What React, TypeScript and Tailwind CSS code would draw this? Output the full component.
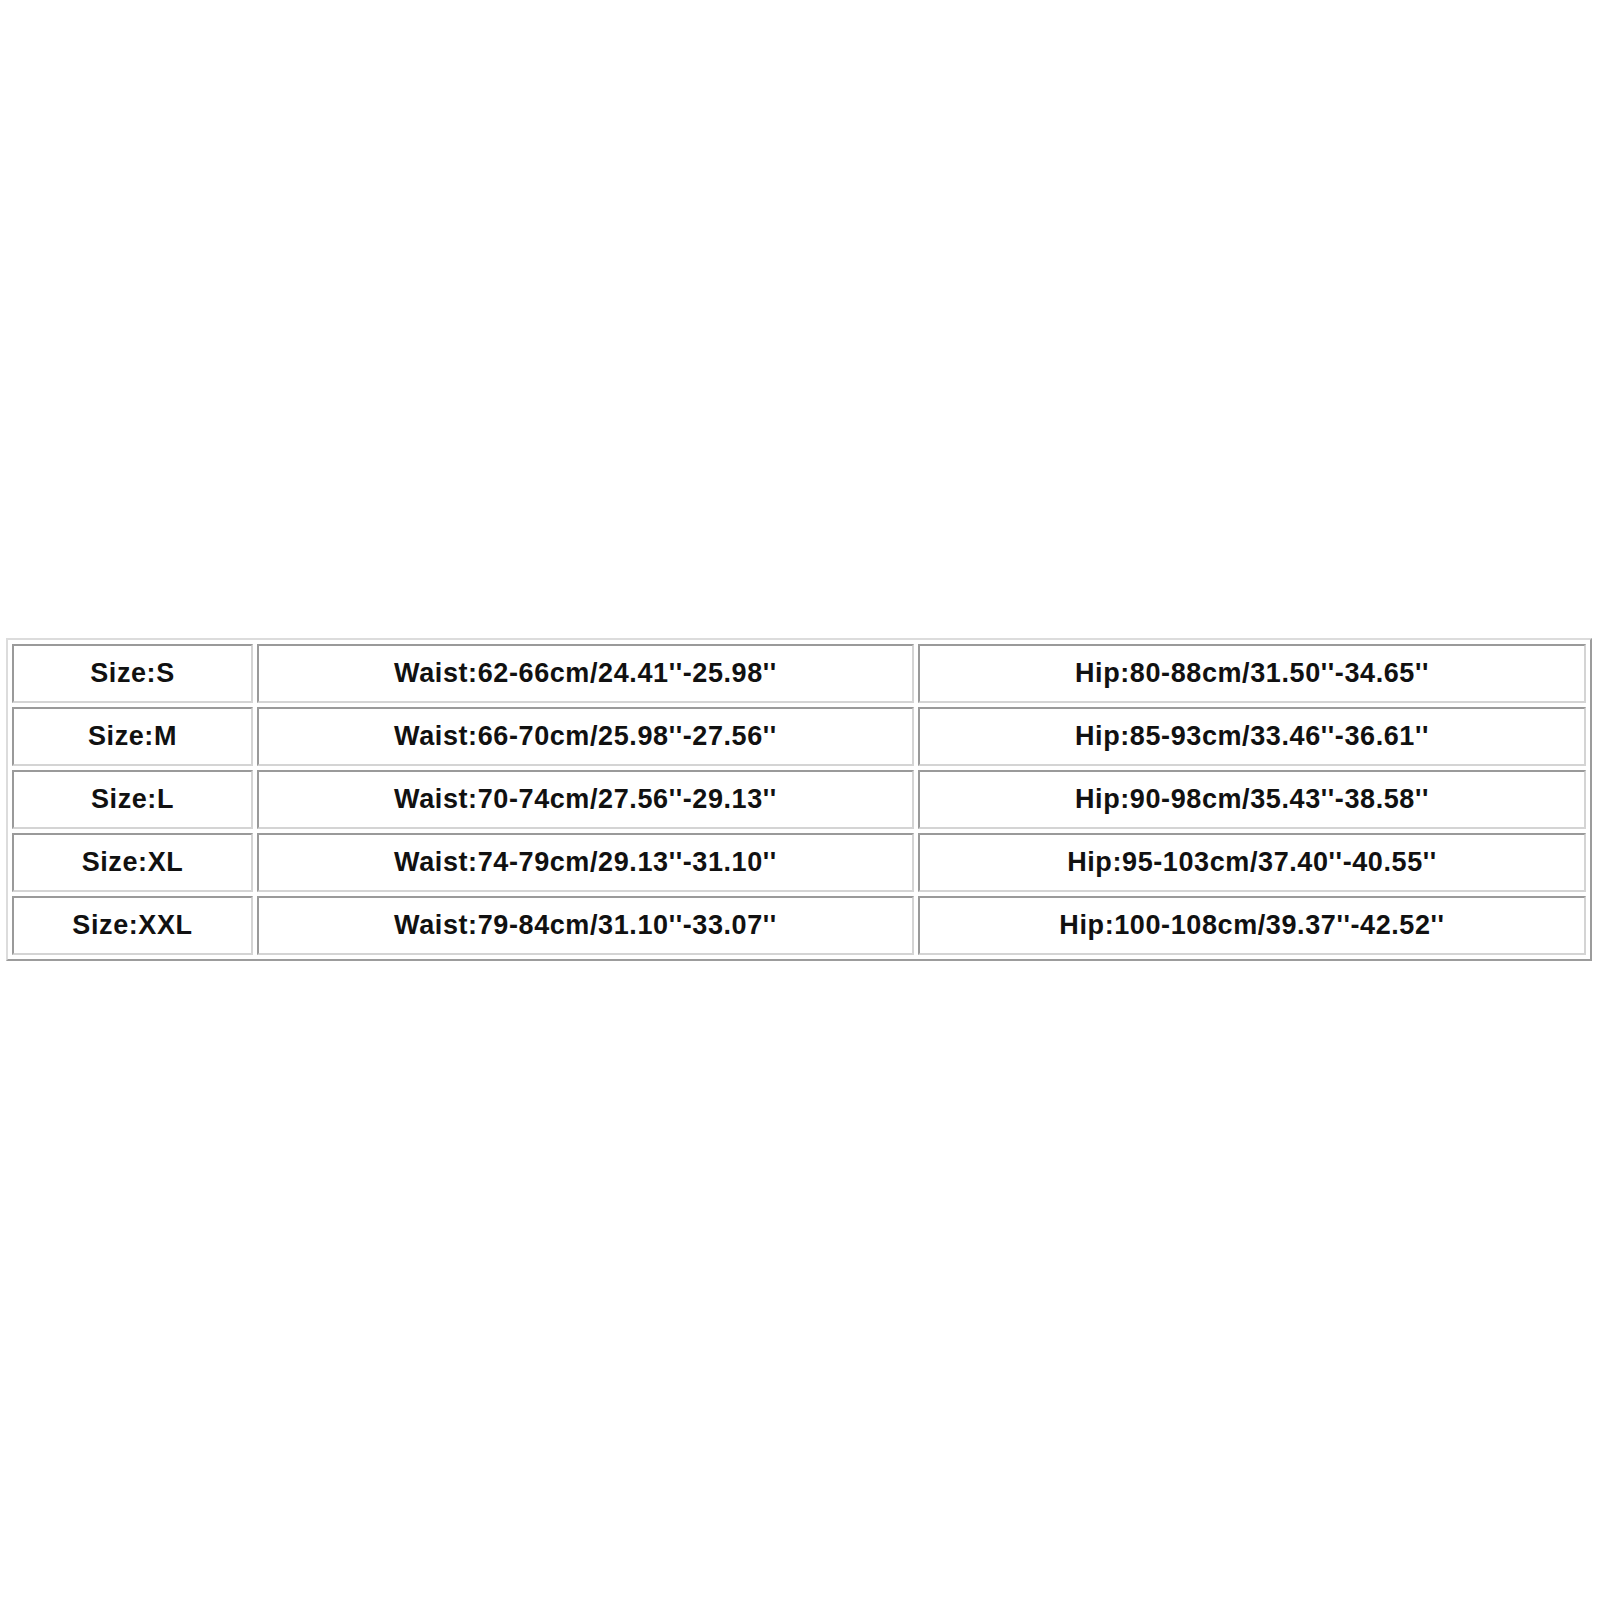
import React from 'react';

const rows = [
  ['Size:S', "Waist:62-66cm/24.41''-25.98''", "Hip:80-88cm/31.50''-34.65''"],
  ['Size:M', "Waist:66-70cm/25.98''-27.56''", "Hip:85-93cm/33.46''-36.61''"],
  ['Size:L', "Waist:70-74cm/27.56''-29.13''", "Hip:90-98cm/35.43''-38.58''"],
  ['Size:XL', "Waist:74-79cm/29.13''-31.10''", "Hip:95-103cm/37.40''-40.55''"],
  ['Size:XXL', "Waist:79-84cm/31.10''-33.07''", "Hip:100-108cm/39.37''-42.52''"],
];

const widths = ['w-[241px]', 'w-[657px]', 'w-[668px]'];

const Cell = ({ text, width }: { text: string; width: string }) => (
  <div
    className={`${width} h-[59px] flex items-center justify-center border-2 border-t-[#9a9a9a] border-l-[#9a9a9a] border-b-[#d4d4d4] border-r-[#d4d4d4] bg-white`}
  >
    <span className="text-[27px] font-bold tracking-[0.6px] text-[#111111] leading-none">{text}</span>
  </div>
);

export default function App() {
  return (
    <div className="w-[1600px] h-[1600px] bg-white pt-[638px] pl-[6px]" style={{ fontFamily: '"Liberation Sans", Arial, sans-serif' }}>
      <div className="w-[1586px] flex flex-col gap-[4px] p-[4px] border-2 border-t-[#dcdcdc] border-l-[#dcdcdc] border-b-[#9c9c9c] border-r-[#9c9c9c]">
        {rows.map((row) => (
          <div key={row[0]} className="flex gap-[4px]">
            {row.map((text, i) => (
              <Cell key={i} text={text} width={widths[i]} />
            ))}
          </div>
        ))}
      </div>
    </div>
  );
}
